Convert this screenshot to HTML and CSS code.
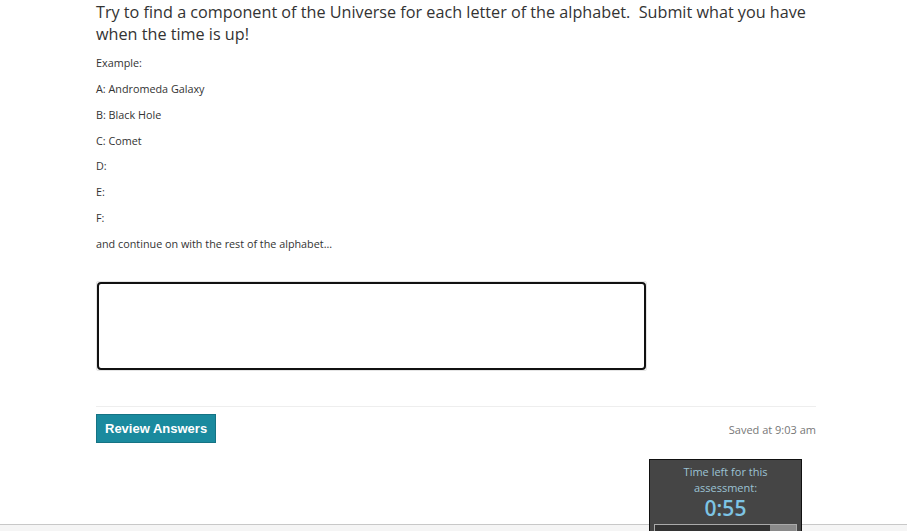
FILE: index.html
```html
<!DOCTYPE html>
<html>
<head>
<meta charset="utf-8">
<link rel="stylesheet" href="styles.css">
</head>
<body>
<div class="page">
  <p class="prompt">Try to find a component of the Universe for each letter of the alphabet.&nbsp; Submit what you have when the time is up!</p>
  <div class="example">
    <p>Example:</p>
    <p>A: Andromeda Galaxy</p>
    <p>B: Black Hole</p>
    <p>C: Comet</p>
    <p>D:</p>
    <p>E:</p>
    <p>F:</p>
    <p>and continue on with the rest of the alphabet...</p>
  </div>
  <div class="answer-wrap"><textarea class="answer" autofocus></textarea></div>
  <div class="actions">
    <button class="review">Review Answers</button>
    <span class="saved">Saved at 9:03 am</span>
  </div>
</div>
<div class="footer"></div>
<div class="timer">
  <div class="timer-label">Time left for this assessment:</div>
  <div class="timer-value">0:55</div>
  <div class="timer-bar"><div class="timer-fill"></div></div>
</div>
</body>
</html>
```
FILE: styles.css
```css
html, body { margin: 0; padding: 0; background: #fff; }
body { font-family: "Open Sans", "Liberation Sans", sans-serif; color: #333; overflow: hidden; height: 531px; }
.page { width: 720px; margin-left: 96px; }
.prompt { margin: 1px 0 0; font-size: 16.2px; line-height: 22px; color: #333; }
.example { margin-top: 10px; }
.example p { margin: 0 0 10.85px; font-size: 10.8px; line-height: 15px; color: #333; }
.answer-wrap { margin-top: 30px; width: 551px; border: 1px solid #e4e4e4; border-radius: 2px; box-sizing: border-box; height: 90px; }
.answer { display: block; width: 549px; height: 88px; box-sizing: border-box; border: 2px solid #111; border-radius: 4px; resize: none; outline: none; padding: 3px 4px; font-family: inherit; font-size: 13px; margin: 0; caret-color: #000; }
.actions { margin-top: 35px; border-top: 1px solid #eee; padding-top: 7px; display: flex; justify-content: space-between; align-items: center; }
.review { background: #1a8a9e; border: 1px solid #157384; color: #fff; font-family: "Liberation Sans", Arial, sans-serif; font-weight: bold; font-size: 13px; height: 29px; padding: 0 8px; border-radius: 0; }
.saved { font-size: 11px; color: #777; padding-top: 2px; }
.footer { position: fixed; left: 0; right: 0; bottom: 0; height: 6px; border-top: 1px solid #c8c8c8; background: #f5f5f5; }
.timer { position: fixed; left: 649px; top: 459px; width: 153px; height: 90px; box-sizing: border-box; background: #454545; border: 1px solid #111; z-index: 2; text-align: center; padding: 4px 4px 0; }
.timer-label { font-size: 11px; line-height: 16px; color: #9cc3d4; padding: 0 26px; }
.timer-value { font-size: 21px; line-height: 24px; color: #7dc4e4; font-weight: 600; margin-top: 0; }
.timer-bar { margin-top: 4px; height: 14px; border: 1px solid #aaa; background: #333; position: relative; }
.timer-fill { position: absolute; right: 0; top: 0; bottom: 0; width: 26px; background: #8a8a8a; }
```
